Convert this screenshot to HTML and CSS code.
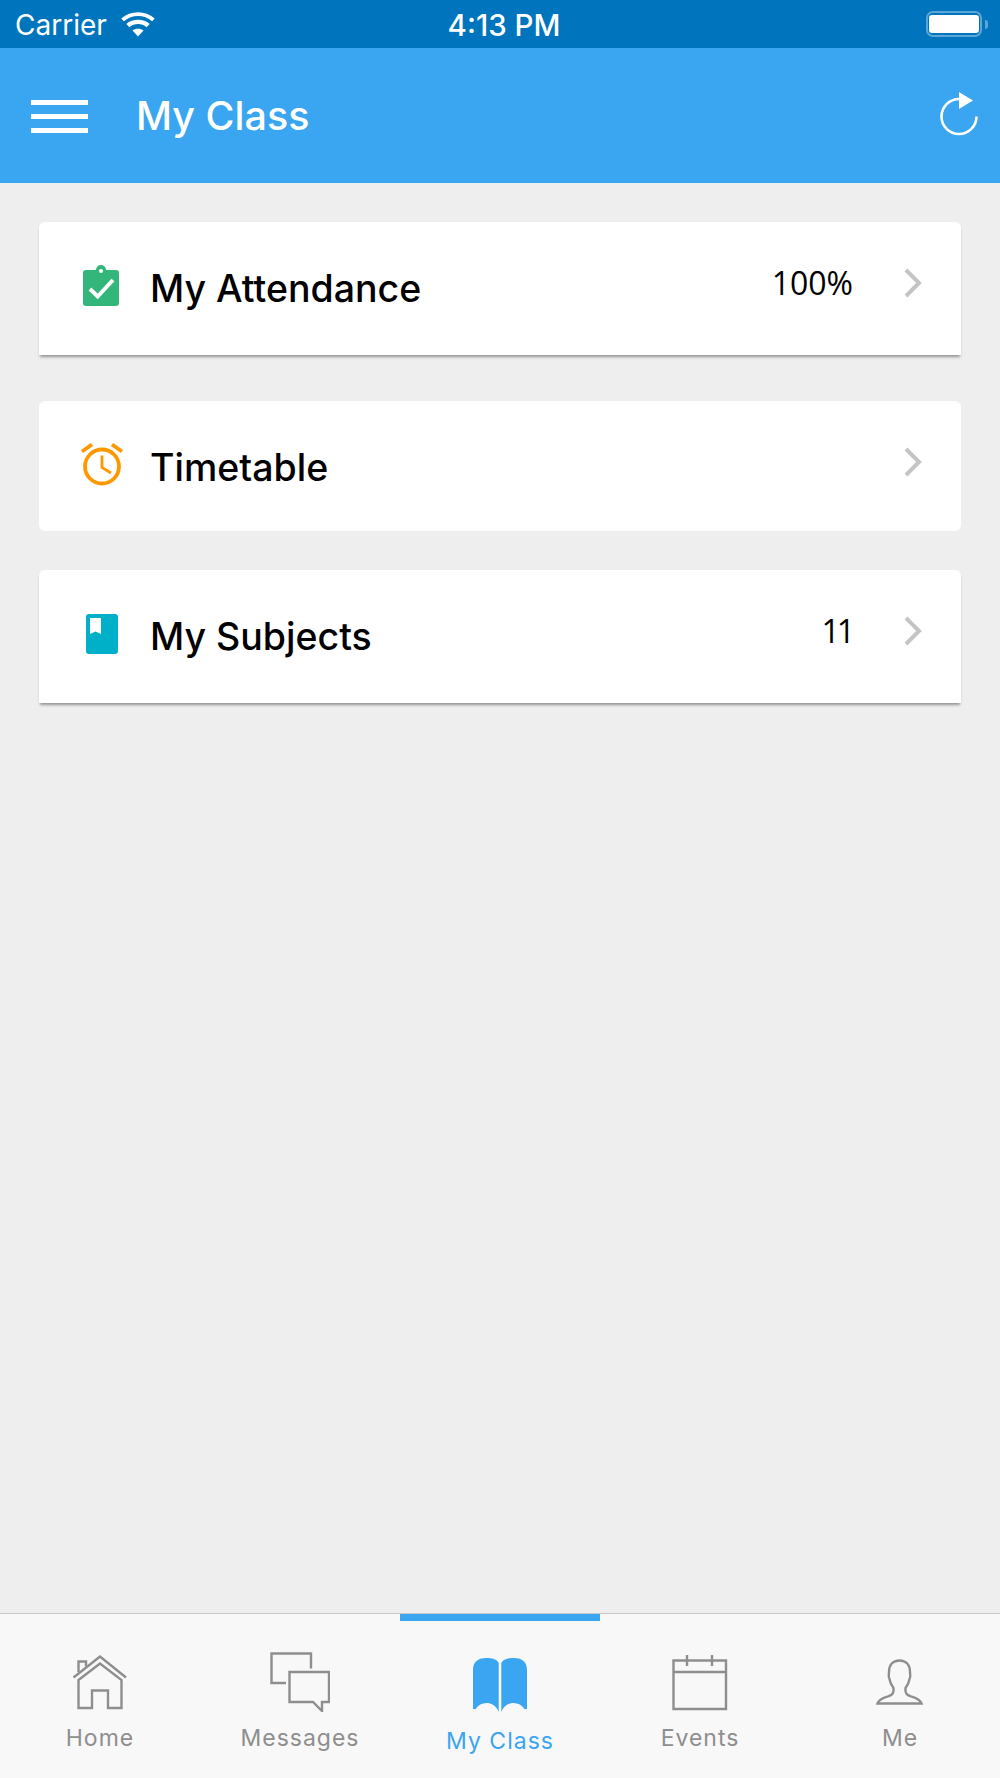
FILE: index.html
```html
<!DOCTYPE html>
<html lang="en">
<head>
    <meta charset="UTF-8">
    <meta name="viewport" content="width=device-width, initial-scale=1.0">
    <title>My Class</title>
    <link rel="stylesheet" href="styles.css">
</head>
<body>
    <div class="status-bar">
        <div class="status-left">
            <span class="carrier">Carrier</span>
            <svg class="wifi" viewBox="0 0 34 25" width="34" height="25">
                <path d="M17 24.5 L11.5 18.6 C14.6 16 19.4 16 22.5 18.6 Z" fill="#fff"/>
                <path d="M8.4 15.2 L5.3 11.9 C11.6 6.4 22.4 6.4 28.7 11.9 L25.6 15.2 C20.8 11 13.2 11 8.4 15.2 Z" fill="#fff"/>
                <path d="M2.9 9.3 L0.3 6.4 C9.6 -1.8 24.4 -1.8 33.7 6.4 L31.1 9.3 C23.2 2.2 10.8 2.2 2.9 9.3 Z" fill="#fff"/>
            </svg>
        </div>
        <span class="clock">4:13 PM</span>
        <div class="battery">
            <div class="battery-body"><div class="battery-level"></div></div>
            <div class="battery-cap"></div>
        </div>
    </div>

    <header>
        <div class="menu-toggle">
            <span></span>
            <span></span>
            <span></span>
        </div>
        <h1>My Class</h1>
        <svg class="refresh" viewBox="0 0 40 44" width="40" height="44">
            <path d="M36.5 24.5 A17.5 17.5 0 1 1 19 7" fill="none" stroke="#fff" stroke-width="2.6"/>
            <path d="M19 0 L33 8.5 L19 17 Z" fill="#fff"/>
        </svg>
    </header>

    <main>
        <a class="card card-raised card-first">
            <svg class="card-icon" viewBox="0 0 44 44" width="44" height="44">
                <path d="M6 6 H16 A5 5 0 0 1 26 6 H36 A3 3 0 0 1 39 9 V39 A3 3 0 0 1 36 42 H6 A3 3 0 0 1 3 39 V9 A3 3 0 0 1 6 6 Z" fill="#33b679"/>
                <circle cx="21" cy="7" r="2.1" fill="#fff"/>
                <path d="M10 25 L17.7 32.5 L33 16" fill="none" stroke="#fff" stroke-width="4"/>
            </svg>
            <span class="card-label">My Attendance</span>
            <span class="card-value">100%</span>
            <svg class="chevron" viewBox="0 0 20 30" width="20" height="30">
                <path d="M3 2 L16 15 L3 28" fill="none" stroke="#c4c4c4" stroke-width="4"/>
            </svg>
        </a>
        <a class="card card-second">
            <svg class="card-icon" viewBox="0 0 44 44" width="44" height="44">
                <circle cx="22" cy="23.5" r="17" fill="none" stroke="#ff9800" stroke-width="3.8"/>
                <path d="M22 12.5 V24.5 L31 30" fill="none" stroke="#ff9800" stroke-width="2.8"/>
                <path d="M2 8.5 L12 1.5 M42 8.5 L32 1.5" fill="none" stroke="#ff9800" stroke-width="3.8"/>
            </svg>
            <span class="card-label">Timetable</span>
            <svg class="chevron" viewBox="0 0 20 30" width="20" height="30">
                <path d="M3 2 L16 15 L3 28" fill="none" stroke="#c4c4c4" stroke-width="4"/>
            </svg>
        </a>
        <a class="card card-raised">
            <svg class="card-icon" viewBox="0 0 44 44" width="44" height="44">
                <path d="M9 2 H35 A3 3 0 0 1 38 5 V39 A3 3 0 0 1 35 42 H9 A3 3 0 0 1 6 39 V5 A3 3 0 0 1 9 2 Z" fill="#00b0c8"/>
                <path d="M10 6 H21 V22 L15.5 19.5 L10 22 Z" fill="#fff"/>
            </svg>
            <span class="card-label">My Subjects</span>
            <span class="card-value card-count">11</span>
            <svg class="chevron" viewBox="0 0 20 30" width="20" height="30">
                <path d="M3 2 L16 15 L3 28" fill="none" stroke="#c4c4c4" stroke-width="4"/>
            </svg>
        </a>
    </main>

    <nav class="tab-bar">
        <a class="tab">
            <svg viewBox="0 0 60 60" width="60" height="60">
                <path d="M3.5 25.5 L30 4.5 L56 25.5" fill="none" stroke="#8e8e8e" stroke-width="2.4"/>
                <path d="M8.5 28 L30 11.5 L51.5 28 V56 H38 V38.5 H22 V56 H8.5 Z" fill="none" stroke="#8e8e8e" stroke-width="2.4"/>
                <path d="M8.5 20 V9.5 H16 V14.5" fill="none" stroke="#8e8e8e" stroke-width="2.4"/>
            </svg>
            <span>Home</span>
        </a>
        <a class="tab">
            <svg viewBox="0 0 60 60" width="60" height="60">
                <path d="M16 31 H1.5 V1.5 H41 V16.5" fill="none" stroke="#8e8e8e" stroke-width="2.4"/>
                <path d="M19.5 20 H59 V50 H52 V59 L43 50 H19.5 Z" fill="none" stroke="#8e8e8e" stroke-width="2.4"/>
            </svg>
            <span>Messages</span>
        </a>
        <a class="tab tab-active">
            <svg viewBox="0 0 60 60" width="60" height="60">
                <path d="M3 18 C3 9 9 6 16 6 C22 6 27 7 28.7 11 V60 C26 53 21 51 16.5 51 C12 51 8 53 5.5 57 H3 Z" fill="#3aa5f1"/>
                <path d="M57 18 C57 9 51 6 44 6 C38 6 33 7 31.3 11 V60 C34 53 39 51 43.5 51 C48 51 52 53 54.5 57 H57 Z" fill="#3aa5f1"/>
            </svg>
            <span>My Class</span>
        </a>
        <a class="tab">
            <svg viewBox="0 0 60 60" width="60" height="60">
                <path d="M3.5 8.5 H56 V57 H3.5 Z M3.5 20 H56 M17 3 V14 M42 3 V14" fill="none" stroke="#8e8e8e" stroke-width="2.4"/>
            </svg>
            <span>Events</span>
        </a>
        <a class="tab">
            <svg viewBox="0 0 60 60" width="60" height="60">
                <path d="M7.5 51.5 H51.5 C50 47 45 46 40 44 C36 43 35 40 35.5 36 C38 33 39 30 39.5 27 C41 25 40 22 40 20 C40 13 36 8.5 29.5 8.5 C23 8.5 19 13 19 20 C19 22 18 25 19.5 27 C20 30 21 33 23.5 36 C24 40 23 43 19 44 C14 46 9 47 7.5 51.5 Z" fill="none" stroke="#8e8e8e" stroke-width="2.4"/>
            </svg>
            <span>Me</span>
        </a>
    </nav>
</body>
</html>
```

FILE: styles.css
```css
body {
    font-family: Inter, "Liberation Sans", sans-serif;
    margin: 0;
    padding: 0;
    width: 1000px;
    height: 1778px;
    overflow: hidden;
    display: flex;
    flex-direction: column;
    background-color: #eee;
}
.status-bar {
    height: 48px;
    background-color: #0075be;
    color: white;
    display: flex;
    align-items: center;
    justify-content: space-between;
    padding: 0 12px 0 15px;
    position: relative;
}
.status-left {
    display: flex;
    align-items: center;
    gap: 14px;
}
.carrier {
    font-size: 28px;
    font-weight: 400;
    margin-top: 2px;
}
.clock {
    position: absolute;
    left: 0;
    right: 0;
    top: 7px;
    padding-left: 8px;
    text-align: center;
    font-size: 29.5px;
    font-weight: 500;
}
.battery {
    display: flex;
    align-items: center;
    gap: 3px;
}
.battery-body {
    width: 56px;
    height: 26px;
    box-sizing: border-box;
    border: 2px solid #5aa6d8;
    border-radius: 7px;
    padding: 2px 1px;
    display: flex;
}
.battery-level {
    flex: 1;
    background-color: white;
    border-radius: 3px;
}
.battery-cap {
    width: 3px;
    height: 9px;
    background-color: #5aa6d8;
    border-radius: 0 3px 3px 0;
}
header {
    height: 135px;
    background-color: #3aa5f1;
    color: white;
    display: flex;
    align-items: center;
    padding: 0 20px 0 31px;
}
.menu-toggle {
    width: 57px;
    height: 33px;
    display: flex;
    flex-direction: column;
    justify-content: space-between;
    margin: 2px 48px 0 0;
}
.menu-toggle span {
    height: 5px;
    background-color: white;
}
header h1 {
    margin: 0;
    flex: 1;
    font-size: 39.5px;
    font-weight: 500;
}
.refresh {
    margin-bottom: 4px;
}
main {
    flex: 1;
    padding: 39px 39px 0;
}
.card {
    height: 133px;
    box-sizing: border-box;
    background-color: white;
    border-radius: 6px;
    display: flex;
    align-items: center;
    padding: 0 38px 6px 41px;
    margin-bottom: 39px;
}
.card-raised {
    border-radius: 6px 6px 0 0;
    box-shadow: 0 3px 3px -1px rgba(0, 0, 0, 0.38);
}
.card-first {
    margin-bottom: 46px;
}
.card-second {
    height: 130px;
    padding-bottom: 2px;
}
.card-icon {
    margin-right: 26px;
}
.card-label {
    flex: 1;
    font-size: 37.5px;
    font-weight: 450;
    color: #000;
    margin-top: 6px;
}
.card-second .card-label {
    margin-top: 4px;
}
.card-value {
    font-family: "Open Sans", sans-serif;
    font-size: 32px;
    color: #000;
    margin: 0 50px 6px 0;
}
.card-count {
    letter-spacing: -3px;
    margin-right: 51px;
}
.chevron {
    margin-bottom: 6px;
}
.tab-bar {
    height: 165px;
    box-sizing: border-box;
    border-top: 1px solid #c8c8c8;
    background-color: #f8f8f8;
    display: grid;
    grid-template-columns: repeat(5, 1fr);
}
.tab {
    display: flex;
    flex-direction: column;
    align-items: center;
    padding-top: 38px;
    color: #8e8e8e;
    font-size: 23px;
    letter-spacing: 1px;
}
.tab span {
    margin-top: 12px;
}
.tab-active {
    color: #3aa5f1;
    border-top: 7px solid #3aa5f1;
    padding-top: 31px;
}
.tab-active span {
    margin-top: 15px;
}
```
